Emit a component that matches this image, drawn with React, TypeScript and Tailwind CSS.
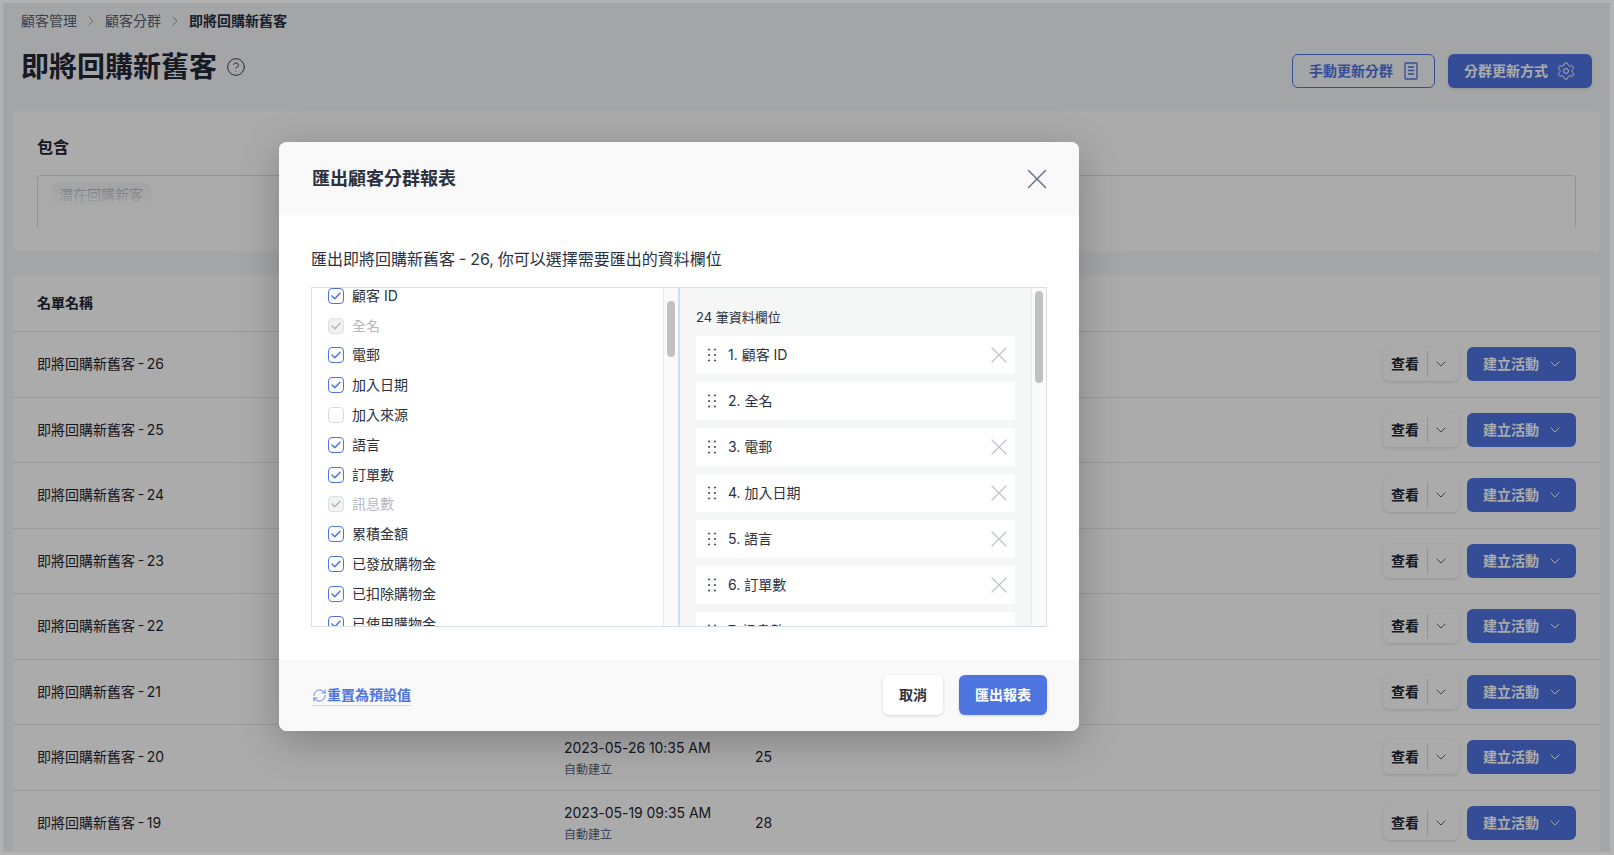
import { ChevronDown, ChevronRight, CircleHelp, RefreshCw, Settings, X } from "lucide-react";

const rows = [
  { n: 26 }, { n: 25 }, { n: 24 }, { n: 23 }, { n: 22 }, { n: 21 },
  { n: 20, date: "2023-05-26 10:35 AM", count: "25" },
  { n: 19, date: "2023-05-19 09:35 AM", count: "28" },
];

const fields: { label: string; state: "on" | "off" | "locked" }[] = [
  { label: "顧客 ID", state: "on" },
  { label: "全名", state: "locked" },
  { label: "電郵", state: "on" },
  { label: "加入日期", state: "on" },
  { label: "加入來源", state: "off" },
  { label: "語言", state: "on" },
  { label: "訂單數", state: "on" },
  { label: "訊息數", state: "locked" },
  { label: "累積金額", state: "on" },
  { label: "已發放購物金", state: "on" },
  { label: "已扣除購物金", state: "on" },
  { label: "已使用購物金", state: "on" },
];

const selected = [
  { label: "1. 顧客 ID", removable: true },
  { label: "2. 全名", removable: false },
  { label: "3. 電郵", removable: true },
  { label: "4. 加入日期", removable: true },
  { label: "5. 語言", removable: true },
  { label: "6. 訂單數", removable: true },
  { label: "7. 訊息數", removable: false },
];

function Check({ state }: { state: "on" | "off" | "locked" }) {
  if (state === "off") {
    return <span className="h-4 w-4 shrink-0 rounded-[4px] border border-[#d5dbe6] bg-white" />;
  }
  const locked = state === "locked";
  return (
    <span
      className={
        locked
          ? "flex h-4 w-4 shrink-0 items-center justify-center rounded-[4px] border border-[#dcdfe5] bg-[#f1f2f4]"
          : "flex h-4 w-4 shrink-0 items-center justify-center rounded-[4px] border border-[#4e74e0] bg-white"
      }
    >
      <svg width="10" height="8" viewBox="0 0 10 8" fill="none">
        <path
          d="M1 4l2.8 2.8L9 1.2"
          stroke={locked ? "#b4b8c2" : "#4e74e0"}
          strokeWidth="1.5"
          strokeLinecap="round"
          strokeLinejoin="round"
        />
      </svg>
    </span>
  );
}

function Grip() {
  return (
    <svg width="8" height="14" viewBox="0 0 8 14" className="shrink-0" fill="#4b5568">
      <circle cx="1.1" cy="1.5" r="1.1" />
      <circle cx="6.9" cy="1.5" r="1.1" />
      <circle cx="1.1" cy="7" r="1.1" />
      <circle cx="6.9" cy="7" r="1.1" />
      <circle cx="1.1" cy="12.5" r="1.1" />
      <circle cx="6.9" cy="12.5" r="1.1" />
    </svg>
  );
}

function Track({ thumbClass }: { thumbClass: string }) {
  return (
    <div className="flex w-[15px] shrink-0 justify-center border-l border-[#e8e9ec] bg-[#fafafa]">
      <div className={thumbClass} />
    </div>
  );
}

export default function App() {
  return (
    <div
      className="relative h-[855px] w-full overflow-hidden border-[3px] border-r-4 border-[#b3b3b3] bg-[#f5f6f9] text-[#1f2430]"
      style={{ fontFamily: 'Inter, "Noto Sans CJK TC", sans-serif' }}
    >
      <div className="mx-[10px] flex flex-col">
        {/* page header */}
        <div className="px-2 pt-2">
          <div className="flex h-5 items-center text-sm text-[#5a6275]">
            <span>顧客管理</span>
            <ChevronRight className="mx-[6px] h-4 w-4 text-[#8b93a5]" strokeWidth={1.4} />
            <span>顧客分群</span>
            <ChevronRight className="mx-[6px] h-4 w-4 text-[#8b93a5]" strokeWidth={1.4} />
            <span className="font-semibold text-[#2b3140]">即將回購新舊客</span>
          </div>
          <div className="mt-4 flex h-12 items-start justify-between">
            <div className="flex h-10 items-center">
              <h1 className="text-[28px] leading-10 font-bold text-[#232733]">即將回購新舊客</h1>
              <CircleHelp className="ml-[9px] h-5 w-5 text-[#3a4050]" strokeWidth={1.2} />
            </div>
            <div className="mt-[7px] flex items-center gap-[13px]">
              <button className="flex h-[34px] w-[143px] items-center justify-center gap-[11px] rounded-md border border-[#4e74e0] text-sm font-semibold text-[#4e74e0]">
                手動更新分群
                <svg width="14" height="18" viewBox="0 0 14 18" fill="none" stroke="#4e74e0" strokeWidth="1.3">
                  <rect x="1" y="1" width="12" height="16" rx="1" />
                  <path d="M4 5h6M4 8.5h6M4 12h6" />
                </svg>
              </button>
              <button className="flex h-[34px] w-[144px] items-center justify-center gap-[8px] rounded-md bg-[#4e74e0] text-sm font-semibold text-white shadow-sm">
                分群更新方式
                <Settings className="h-5 w-5" strokeWidth={1.2} />
              </button>
            </div>
          </div>
        </div>

        {/* condition card */}
        <section className="mt-4 h-[140px] rounded bg-white px-6 pt-6">
          <h2 className="text-base leading-6 font-semibold">包含</h2>
          <div className="relative mt-[16px] h-[52px] overflow-hidden rounded-t border-x border-t border-[#d9dce2] px-[13px] pt-[6px]">
            <span className="inline-block rounded-md bg-[#eceef2] px-[8px] py-[2px] text-sm text-[#5a6275]">潛在回購新客</span>
            <div className="absolute inset-x-0 top-[2px] h-[30px] bg-gradient-to-b from-white/30 to-white" />
            <div className="absolute inset-x-0 top-[32px] h-5 bg-white" />
          </div>
        </section>

        {/* table card */}
        <section className="mt-6 rounded-t bg-white">
          <div className="flex h-[57px] items-center border-b border-[#dfe2e8] px-6 text-sm font-semibold">名單名稱</div>
          {rows.map((r) => (
            <div key={r.n} className="flex h-[65.5px] items-center border-b border-[#e4e6ec] px-6 text-sm">
              <span className="w-[527px] shrink-0 [word-spacing:-1.3px]">即將回購新舊客 - {r.n}</span>
              <div className="w-[191px] shrink-0 pt-[2px]">
                {r.date && (
                  <>
                    <div className="leading-5 tracking-[-0.05px]">{r.date}</div>
                    <div className="mt-[3px] text-xs leading-[18px] text-[#5a6275]">自動建立</div>
                  </>
                )}
              </div>
              <span className="flex-1">{r.count}</span>
              <div className="flex items-center gap-2">
                <div className="flex h-[34px] w-[76px] items-center rounded-md bg-white shadow-[0_1px_3px_rgba(0,0,0,0.15)]">
                  <span className="w-[44px] text-center font-semibold">查看</span>
                  <span className="h-[26px] w-px bg-[#d9dce2]" />
                  <ChevronDown className="ml-[5px] h-4 w-4 text-[#5a6275]" strokeWidth={1.5} />
                </div>
                <button className="flex h-[34px] w-[109px] items-center gap-2 rounded-md bg-[#4e74e0] pl-4 font-semibold text-white">
                  建立活動
                  <ChevronDown className="h-4 w-4" strokeWidth={1.5} />
                </button>
              </div>
            </div>
          ))}
        </section>
      </div>

      {/* dim layer */}
      <div className="absolute inset-[-4px] bg-black/33" />

      {/* modal */}
      <div className="absolute top-[139px] left-[276px] flex h-[589px] w-[800px] flex-col overflow-hidden rounded-lg bg-white shadow-[0_10px_40px_rgba(0,0,0,0.25)]">
        <div className="flex h-[73px] shrink-0 items-center justify-between bg-[#f9f9fa] pr-[25px] pl-[33px]">
          <h2 className="text-lg font-semibold text-[#2b3140]">匯出顧客分群報表</h2>
          <X className="h-[34px] w-[34px] text-[#6a7285]" strokeWidth={1.05} />
        </div>

        <div className="flex-1 px-[32px] pt-[32px]">
          <p className="text-base leading-6 text-[#2b3140] [word-spacing:-0.6px]">匯出即將回購新舊客 - 26, 你可以選擇需要匯出的資料欄位</p>
          <div className="mt-[16px] flex h-[340px] overflow-hidden border border-[#d8dfe9]">
            <div className="flex w-[368px] shrink-0 border-r-2 border-[#d5dde8]">
              <div className="-mt-[7px] flex-1 pl-4">
                {fields.map((f) => (
                  <div key={f.label} className="flex h-[29.8px] items-center gap-2 text-sm">
                    <Check state={f.state} />
                    <span className={f.state === "locked" ? "text-[#b4b8c2]" : "text-[#2b3140]"}>{f.label}</span>
                  </div>
                ))}
              </div>
              <Track thumbClass="mt-[13px] h-[56px] w-2 rounded bg-[#c1c1c1]" />
            </div>
            <div className="min-w-0 flex-1 bg-[#f5f6f6] px-4 pt-[19px]">
              <div className="text-[13px] leading-5 text-[#2b3140]">24 筆資料欄位</div>
              <div className="mt-[9px] flex flex-col gap-2">
                {selected.map((s) => (
                  <div key={s.label} className="flex h-[38px] shrink-0 items-center bg-white pr-[2px] pl-3 text-sm text-[#2b3140]">
                    <Grip />
                    <span className="ml-3 flex-1">{s.label}</span>
                    {s.removable && <X className="h-7 w-7 text-[#bfc3cd]" strokeWidth={1.1} />}
                  </div>
                ))}
              </div>
            </div>
            <Track thumbClass="mt-[3px] h-[92px] w-2 rounded bg-[#c1c1c1]" />
          </div>
        </div>

        <div className="flex h-[71px] shrink-0 items-center justify-between bg-[#f9f9fa] pr-[32px] pl-[33px]">
          <a className="flex items-center border-b border-[#c8d8f8] text-sm leading-5 font-semibold text-[#4e74e0]">
            <RefreshCw className="h-[15px] w-[15px]" strokeWidth={1.4} />
            重置為預設值
          </a>
          <div className="flex items-center gap-4 pb-[2px]">
            <button className="h-10 w-[60px] rounded-md bg-white text-sm font-semibold text-[#2b3140] shadow-[0_1px_3px_rgba(0,0,0,0.15)]">取消</button>
            <button className="h-10 w-[88px] rounded-md bg-[#4e74e0] text-sm font-semibold text-white shadow-[0_1px_3px_rgba(0,0,0,0.15)]">匯出報表</button>
          </div>
        </div>
      </div>
    </div>
  );
}
